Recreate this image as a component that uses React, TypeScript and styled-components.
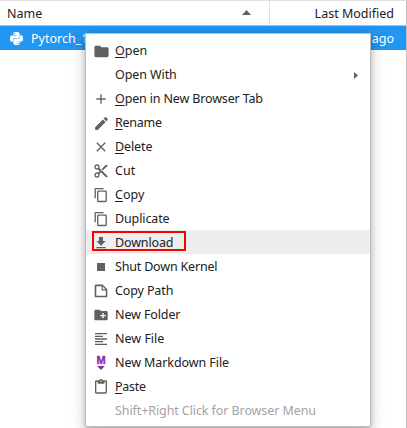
import React from 'react';
import styled, { createGlobalStyle, css } from 'styled-components';
import { SiPython } from 'react-icons/si';

const GlobalStyle = createGlobalStyle`
  *, *::before, *::after { box-sizing: border-box; }
  html, body { margin: 0; padding: 0; background: #fff; overflow: hidden; }
  body { font-family: "Noto Sans", "Open Sans", sans-serif; font-size: 13px; color: #212121; }
`;

const Browser = styled.main`
  position: relative;
  width: 407px;
  height: 428px;
  overflow: hidden;
  background: #fff;
  border-top: 1px solid #e0e0e0;
  border-right: 1px solid #bdbdbd;
`;

const Header = styled.header`
  display: grid;
  grid-template-columns: 269px 1fr;
  height: 25px;
  border-bottom: 1px solid #bdbdbd;
`;

const HeaderCell = styled.div<{ $end?: boolean }>`
  display: flex;
  align-items: center;
  justify-content: ${(p) => (p.$end ? 'flex-end' : 'space-between')};
  padding: ${(p) => (p.$end ? '1px 12px 0 0' : '1px 18px 0 7px')};
  border-left: ${(p) => (p.$end ? '1px solid #e0e0e0' : '0')};
`;

const SortArrow = styled.svg`
  margin-bottom: 3px;
`;

const Text = styled.span<{ $spacing?: number }>`
  white-space: pre;
  font-size: 12.5px;
  line-height: 24px;
  letter-spacing: ${(p) => p.$spacing ?? 0}px;
`;

const FileRow = styled.div`
  display: flex;
  align-items: center;
  height: 24px;
  padding: 1px 12px 0 10px;
  color: #fff;
  background: #2196f3;
`;

const FileName = styled(Text)`
  margin: 0 auto 0 8px;
`;

const Menu = styled.ul`
  position: absolute;
  left: 85px;
  top: 32px;
  width: 286px;
  height: 394px;
  margin: 0;
  padding: 4px 0;
  list-style: none;
  background: #fff;
  border: 1px solid #bdbdbd;
  box-shadow: 0 3px 5px -1px rgba(0, 0, 0, 0.2), 0 6px 10px 0 rgba(0, 0, 0, 0.14),
    0 1px 18px 0 rgba(0, 0, 0, 0.12);
`;

const Item = styled.li<{ $active?: boolean; $disabled?: boolean }>`
  position: relative;
  display: grid;
  grid-template-columns: 16px 1fr 5px;
  column-gap: 6px;
  align-items: center;
  height: 24px;
  padding: 1px 11px 0 7px;
  ${(p) => p.$active && css`background: #eee;`}
  ${(p) => p.$disabled && css`color: #a3a3a3;`}
`;

const Mnemonic = styled.span`
  text-decoration: underline;
  text-decoration-thickness: 1px;
  text-underline-offset: 2px;
`;

const IconSlot = styled.span`
  display: flex;
  align-items: center;
  justify-content: center;
  width: 16px;
  height: 16px;
  color: #616161;
  svg { display: block; flex: none; overflow: visible; }
`;

const Marker = styled.span`
  position: absolute;
  left: 6px;
  top: 1px;
  width: 94px;
  height: 20px;
  border: 2px solid #f00;
`;

const Glyph = ({ d, box = 24, size = 16 }: { d: string; box?: number; size?: number }) => (
  <svg width={size} height={size} viewBox={`0 0 ${box} ${box}`} fill="currentColor">
    <path d={d} />
  </svg>
);

const MarkdownGlyph = () => (
  <svg width="16" height="16" viewBox="0 0 16 16" fill="#8e24aa">
    <text x="8" y="9" textAnchor="middle" fontFamily="Liberation Sans" fontWeight="700" fontSize="11" stroke="#8e24aa" strokeWidth="0.3">M</text>
    <path d="M4.2 11h7.6L8 15z" />
  </svg>
);

const copy = 'M11.9 1H3.2C2.4 1 1.7 1.7 1.7 2.5v10.2h1.5V2.5h8.7V1zM14.1 3.9h-8c-.8 0-1.5.7-1.5 1.5v10.2c0 .8.7 1.5 1.5 1.5h8c.8 0 1.5-.7 1.5-1.5V5.4c-.1-.8-.7-1.5-1.5-1.5zm0 11.6h-8V5.4h8v10.1z';

type Entry = {
  label: string;
  icon?: React.ReactNode;
  key?: boolean;
  spacing?: number;
  submenu?: boolean;
  active?: boolean;
  disabled?: boolean;
};

const entries: Entry[] = [
  { label: 'Open', key: true, icon: <Glyph size={17} d="M10 4H4c-1.1 0-2 .9-2 2v12c0 1.1.9 2 2 2h16c1.1 0 2-.9 2-2V8c0-1.1-.9-2-2-2h-8l-2-2z" /> },
  { label: 'Open With', submenu: true, spacing: -0.1 },
  { label: 'Open in New Browser Tab', key: true, spacing: -0.15, icon: <Glyph d="M19 13h-6v6h-2v-6H5v-2h6V5h2v6h6v2z" /> },
  { label: 'Rename', key: true, spacing: -0.25, icon: <Glyph size={17} d="M3 17.25V21h3.75L17.81 9.94l-3.75-3.75L3 17.25zM20.71 7.04c.39-.39.39-1.02 0-1.41l-2.34-2.34c-.39-.39-1.02-.39-1.41 0l-1.83 1.83 3.75 3.75 1.83-1.83z" /> },
  { label: 'Delete', key: true, spacing: -0.1, icon: <Glyph d="M19 6.41L17.59 5 12 10.59 6.41 5 5 6.41 10.59 12 5 17.59 6.41 19 12 13.41 17.59 19 19 17.59 13.41 12z" /> },
  { label: 'Cut', icon: <Glyph d="M9.64 7.64c.23-.5.36-1.05.36-1.64 0-2.21-1.79-4-4-4S2 3.79 2 6s1.79 4 4 4c.59 0 1.14-.13 1.64-.36L10 12l-2.36 2.36C7.14 14.13 6.59 14 6 14c-2.21 0-4 1.79-4 4s1.79 4 4 4 4-1.79 4-4c0-.59-.13-1.14-.36-1.64L12 14l7 7h3v-1L9.64 7.64zM6 8c-1.1 0-2-.89-2-2s.9-2 2-2 2 .89 2 2-.9 2-2 2zm0 12c-1.1 0-2-.89-2-2s.9-2 2-2 2 .89 2 2-.9 2-2 2zm6-7.5c-.28 0-.5-.22-.5-.5s.22-.5.5-.5.5.22.5.5-.22.5-.5.5zM19 3l-6 6 2 2 7-7V3z" /> },
  { label: 'Copy', key: true, icon: <Glyph box={18} d={copy} /> },
  { label: 'Duplicate', spacing: -0.12, icon: <Glyph box={18} d={copy} /> },
  { label: 'Download', spacing: -0.15, active: true, icon: <Glyph d="M19 9h-4V3H9v6H5l7 7 7-7zM5 18v2h14v-2H5z" /> },
  { label: 'Shut Down Kernel', spacing: -0.18, icon: <Glyph d="M6 6h12v12H6z" /> },
  { label: 'Copy Path', spacing: -0.12, icon: <Glyph box={22} d="M19.3 8.2l-5.5-5.5c-.3-.3-.7-.5-1.2-.5H3.9c-.8.1-1.6.9-1.6 1.8v14.1c0 .9.7 1.6 1.6 1.6h14.2c.9 0 1.6-.7 1.6-1.6V9.4c.1-.5-.1-.9-.4-1.2zm-5.8-3.3l3.4 3.6h-3.4V4.9zm3.9 12.7H4.7c-.1 0-.2 0-.2-.2V4.7c0-.2.1-.3.2-.3h7.2v4.4s0 .8.3 1.1c.3.3 1.1.3 1.1.3h4.3v7.2s-.1.2-.2.2z" /> },
  { label: 'New Folder', spacing: -0.12, icon: <Glyph d="M20 6h-8l-2-2H4c-1.11 0-1.99.89-1.99 2L2 18c0 1.11.89 2 2 2h16c1.11 0 2-.89 2-2V8c0-1.11-.89-2-2-2zm-1 8h-3v3h-2v-3h-3v-2h3V9h2v3h3v2z" /> },
  { label: 'New File', icon: <Glyph d="M15 15H3v2h12v-2zm0-8H3v2h12V7zM3 13h18v-2H3v2zm0 8h18v-2H3v2zM3 3v2h18V3H3z" /> },
  { label: 'New Markdown File', spacing: -0.08, icon: <MarkdownGlyph /> },
  { label: 'Paste', key: true, spacing: -0.3, icon: <Glyph d="M19 2h-4.18C14.4.84 13.3 0 12 0c-1.3 0-2.4.84-2.82 2H5c-1.1 0-2 .9-2 2v16c0 1.1.9 2 2 2h14c1.1 0 2-.9 2-2V4c0-1.1-.9-2-2-2zm-7 0c.55 0 1 .45 1 1s-.45 1-1 1-1-.45-1-1 .45-1 1-1zm7 18H5V4h2v3h10V4h2v16z" /> },
  { label: 'Shift+Right Click for Browser Menu', disabled: true, spacing: -0.09 },
];

export default function App() {
  return (
    <>
      <GlobalStyle />
      <Browser>
        <Header>
          <HeaderCell>
            <Text>Name</Text>
            <SortArrow width="9" height="5" viewBox="0 0 9 5" fill="#616161"><path d="M0 5l4.5-5L9 5z" /></SortArrow>
          </HeaderCell>
          <HeaderCell $end><Text>Last Modified</Text></HeaderCell>
        </Header>
        <FileRow>
          <SiPython size={13} />
          <FileName>Pytorch_1</FileName>
          <Text>ago</Text>
        </FileRow>
        <Menu>
          {entries.map((e) => (
            <Item key={e.label} $active={e.active} $disabled={e.disabled}>
              <IconSlot>{e.icon}</IconSlot>
              <Text $spacing={e.spacing}>
                {e.key ? <><Mnemonic>{e.label[0]}</Mnemonic>{e.label.slice(1)}</> : e.label}
              </Text>
              {e.submenu && <svg width="4" height="7" viewBox="0 0 4 7" fill="#616161"><path d="M0 0l4 3.5L0 7z" /></svg>}
              {e.active && <Marker />}
            </Item>
          ))}
        </Menu>
      </Browser>
    </>
  );
}
